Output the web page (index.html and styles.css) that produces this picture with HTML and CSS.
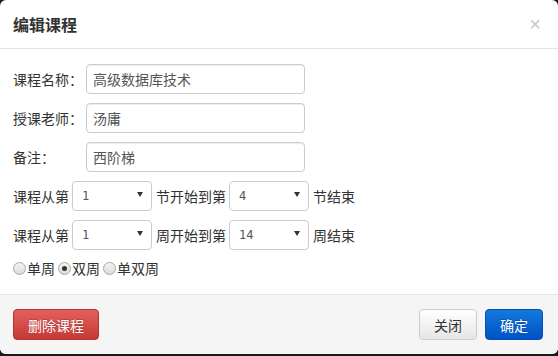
FILE: index.html
```html
<!DOCTYPE html>
<html lang="zh-CN">
<head>
    <meta charset="UTF-8">
    <meta name="viewport" content="width=device-width, initial-scale=1.0">
    <title>编辑课程</title>
    <link rel="stylesheet" href="styles.css">
</head>
<body>
    <div class="modal">
        <!-- 头部 -->
        <div class="modal-header">
            <h4 class="modal-title">编辑课程</h4>
            <button class="close">&times;</button>
        </div>

        <!-- 表单 -->
        <div class="modal-body">
            <div class="form-row">
                <label class="form-label">课程名称：</label>
                <input class="form-input" type="text" value="高级数据库技术">
            </div>
            <div class="form-row">
                <label class="form-label">授课老师：</label>
                <input class="form-input" type="text" value="汤庸">
            </div>
            <div class="form-row">
                <label class="form-label">备注：</label>
                <input class="form-input" type="text" value="西阶梯">
            </div>
            <div class="form-row">
                <span>课程从第</span>
                <div class="select-wrap">
                    <select class="form-select"><option>1</option></select>
                </div>
                <span>节开始到第</span>
                <div class="select-wrap">
                    <select class="form-select"><option>4</option></select>
                </div>
                <span>节结束</span>
            </div>
            <div class="form-row">
                <span>课程从第</span>
                <div class="select-wrap">
                    <select class="form-select"><option>1</option></select>
                </div>
                <span>周开始到第</span>
                <div class="select-wrap">
                    <select class="form-select"><option>14</option></select>
                </div>
                <span>周结束</span>
            </div>
            <div class="radio-row">
                <label class="radio"><input type="radio" name="week">单周</label>
                <label class="radio"><input type="radio" name="week" checked>双周</label>
                <label class="radio"><input type="radio" name="week">单双周</label>
            </div>
        </div>

        <!-- 底部按钮 -->
        <div class="modal-footer">
            <button class="btn btn-danger">删除课程</button>
            <div class="footer-right">
                <button class="btn btn-default">关闭</button>
                <button class="btn btn-primary">确定</button>
            </div>
        </div>
    </div>
</body>
</html>
```

FILE: styles.css
```css
* {
    margin: 0;
    padding: 0;
    box-sizing: border-box;
}

body {
    font-family: "Noto Sans CJK SC", "Liberation Sans", sans-serif;
    font-size: 14px;
    color: #333;
    background: #1a1a1a;
    width: 558px;
    height: 356px;
    overflow: hidden;
}

.modal {
    width: 558px;
    height: 354px;
    background: #fff;
    border-radius: 6px;
    overflow: hidden;
    display: flex;
    flex-direction: column;
}

.modal-header {
    height: 49px;
    padding: 0 13px;
    border-bottom: 1px solid #e5e5e5;
    display: flex;
    align-items: center;
    justify-content: space-between;
}

.modal-title {
    font-size: 16px;
    font-weight: bold;
    color: #333;
    line-height: 1;
}

.close {
    border: none;
    background: none;
    font-family: "Liberation Sans", sans-serif;
    font-size: 20px;
    color: #c8c8c8;
    line-height: 1;
    margin-right: 4px;
    cursor: pointer;
}

.modal-body {
    flex: 1;
    padding: 15px 13px 0;
    display: flex;
    flex-direction: column;
    gap: 9px;
}

.form-row {
    display: flex;
    align-items: center;
    height: 30px;
    color: #333;
    white-space: nowrap;
}

.form-label {
    width: 73px;
    flex-shrink: 0;
}

.form-input {
    width: 219px;
    height: 30px;
    border: 1px solid #ccc;
    border-radius: 4px;
    padding: 0 6px;
    font-family: inherit;
    font-size: 14px;
    color: #555;
    box-shadow: inset 0 1px 1px rgba(0, 0, 0, 0.075);
}

.select-wrap {
    position: relative;
    margin: 0 4px 0 3px;
}

.select-wrap::after {
    content: "";
    position: absolute;
    right: 9px;
    top: 11px;
    border-left: 3px solid transparent;
    border-right: 3px solid transparent;
    border-top: 5px solid #333;
}

.form-select {
    appearance: none;
    -webkit-appearance: none;
    width: 80px;
    height: 30px;
    border: 1px solid #ccc;
    border-radius: 4px;
    background: #fff;
    padding: 0 9px;
    font-family: "DejaVu Sans Mono", monospace;
    font-size: 12px;
    color: #555;
}

.radio-row {
    display: flex;
    align-items: center;
    height: 18px;
}

.radio {
    display: flex;
    align-items: center;
    margin-right: 3px;
}

.radio input {
    appearance: none;
    -webkit-appearance: none;
    width: 13px;
    height: 13px;
    margin-right: 1px;
    border: 1px solid #a8a8a8;
    border-radius: 50%;
    background: linear-gradient(#f4f4f4, #dcdcdc);
    display: flex;
    align-items: center;
    justify-content: center;
}

.radio input:checked::after {
    content: "";
    width: 5px;
    height: 5px;
    border-radius: 50%;
    background: #333;
}

.modal-footer {
    height: 60px;
    background: #f5f5f5;
    border-top: 1px solid #e5e5e5;
    padding: 0 15px 0 13px;
    display: flex;
    align-items: center;
    justify-content: space-between;
}

.footer-right {
    display: flex;
    gap: 8px;
}

.btn {
    height: 31px;
    padding: 0 13px;
    border-radius: 4px;
    font-family: inherit;
    font-size: 14px;
    cursor: pointer;
}

.btn-danger {
    width: 86px;
    color: #fff;
    background: linear-gradient(#e4605c, #c23a36);
    border: 1px solid #b9332f;
    text-shadow: 0 -1px 0 rgba(0, 0, 0, 0.2);
}

.btn-default {
    width: 58px;
    color: #333;
    background: linear-gradient(#fff, #e6e6e6);
    border: 1px solid #ccc;
}

.btn-primary {
    width: 58px;
    color: #fff;
    background: linear-gradient(#1578dc, #0052c6);
    border: 1px solid #0050b8;
    text-shadow: 0 -1px 0 rgba(0, 0, 0, 0.2);
}
```
